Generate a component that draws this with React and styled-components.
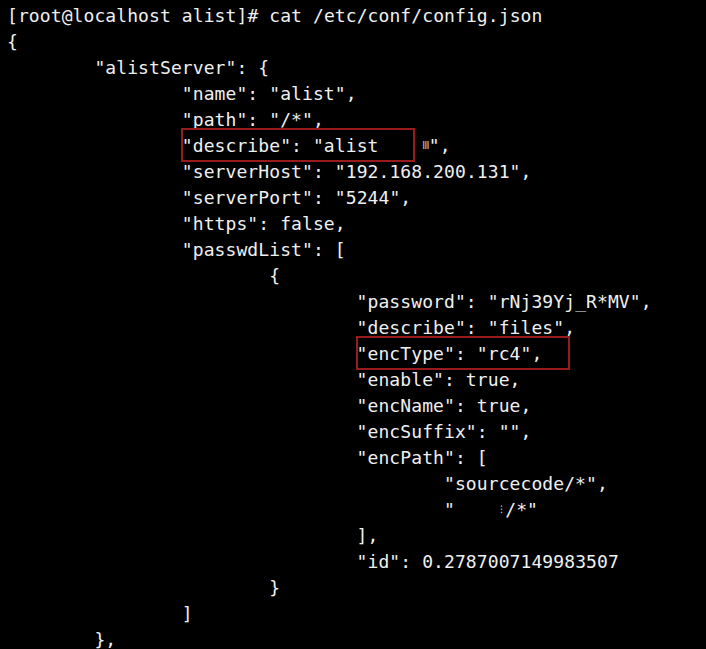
import styled, { createGlobalStyle } from "styled-components";

const Global = createGlobalStyle`
  html, body {
    margin: 0;
    padding: 0;
    background: #000;
  }
`;

const Terminal = styled.div`
  width: 706px;
  height: 649px;
  overflow: hidden;
  background: #000;
  color: #f0f0f0;
  font-family: "DejaVu Sans Mono", "Liberation Mono", monospace;
  font-size: 18px;
  letter-spacing: 0.09px;
  line-height: 26px;
  padding: 3px 0 0 7px;
  box-sizing: border-box;
`;

// one tab stop = 8 columns of 10.93px
const Line = styled.div`
  white-space: pre;
  padding-left: ${(p) => (p.level || 0) * 87.4}px;
  height: 26px;
`;

const Boxed = styled.span`
  position: relative;
  &::after {
    content: "";
    position: absolute;
    left: -1px;
    top: -7px;
    bottom: -6px;
    width: ${(p) => p.width}px;
    border: 2px solid #9a1b1b;
    box-sizing: border-box;
  }
`;

const Smudge = styled.span`
  display: inline-block;
  width: 1ch;
  font-size: 11px;
  color: #bbb;
  text-align: center;
  vertical-align: top;
`;

export default function App() {
  return (
    <>
      <Global />
      <Terminal>
        <Line>[root@localhost alist]# cat /etc/conf/config.json</Line>
        <Line>{"{"}</Line>
        <Line level={1}>"alistServer": {"{"}</Line>
        <Line level={2}>"name": "alist",</Line>
        <Line level={2}>"path": "/*",</Line>
        <Line level={2}>
          <Boxed width={234}>"describe": "alist</Boxed>
          {"    "}
          <Smudge>Ⅲ</Smudge>",
        </Line>
        <Line level={2}>"serverHost": "192.168.200.131",</Line>
        <Line level={2}>"serverPort": "5244",</Line>
        <Line level={2}>"https": false,</Line>
        <Line level={2}>"passwdList": [</Line>
        <Line level={3}>{"{"}</Line>
        <Line level={4}>"password": "rNj39Yj_R*MV",</Line>
        <Line level={4}>"describe": "files",</Line>
        <Line level={4}>
          <Boxed width={214}>"encType": "rc4",</Boxed>
        </Line>
        <Line level={4}>"enable": true,</Line>
        <Line level={4}>"encName": true,</Line>
        <Line level={4}>"encSuffix": "",</Line>
        <Line level={4}>"encPath": [</Line>
        <Line level={5}>"sourcecode/*",</Line>
        <Line level={5}>
          "{"    "}
          <Smudge>⁝</Smudge>/*"
        </Line>
        <Line level={4}>],</Line>
        <Line level={4}>"id": 0.2787007149983507</Line>
        <Line level={3}>{"}"}</Line>
        <Line level={2}>]</Line>
        <Line level={1}>{"},"}</Line>
      </Terminal>
    </>
  );
}
